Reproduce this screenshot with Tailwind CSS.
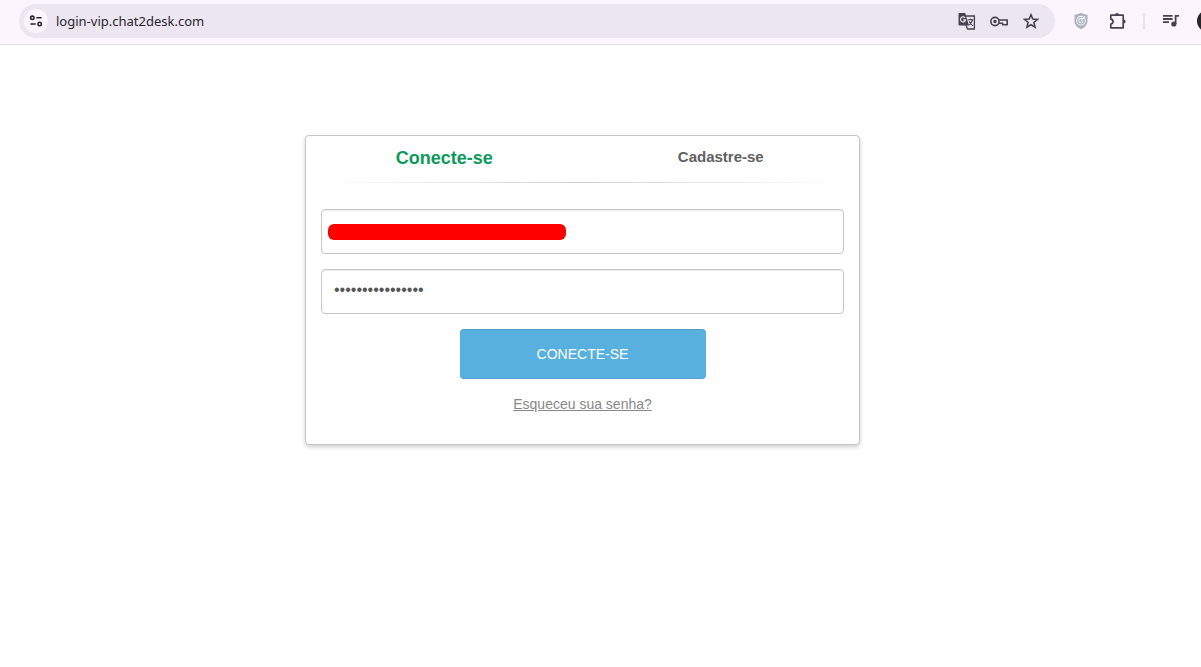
<!DOCTYPE html>
<html lang="pt-br">
<head>
  <meta charset="UTF-8" />
  <meta name="viewport" content="width=device-width, initial-scale=1.0" />
  <title>Conecte-se - Chat2Desk</title>
  <script src="https://cdn.jsdelivr.net/npm/@tailwindcss/browser@4"></script>
</head>
<body class="bg-white min-h-screen overflow-x-hidden font-['Liberation_Sans',Arial,sans-serif]">

  <!-- Barra do navegador -->
  <header class="flex items-start pt-1 pl-[19px] h-[45px] bg-[#fcf5fe] border-b border-[#e4dfe8] overflow-hidden text-[#47424f]">
    <div class="flex flex-1 items-center h-[34px] rounded-full bg-[#ece6f1] pl-[5px] pr-[14px]">
      <button type="button" aria-label="Informações do site" class="flex items-center justify-center size-6 rounded-full bg-[#fcf5fe] text-[#29252e]">
        <svg class="size-4" viewBox="0 0 16 16" fill="none" stroke="currentColor" stroke-width="1.6">
          <circle cx="4.3" cy="4.8" r="1.7" />
          <path d="M8.3 4.8H13.6M2.4 11H7.7" />
          <circle cx="11.7" cy="11" r="1.7" />
        </svg>
      </button>
      <input type="text" aria-label="Endereço" value="login-vip.chat2desk.com"
        class="flex-1 ml-2 h-6 text-[13px] text-[#29252e] bg-transparent outline-none font-['Noto_Sans','Open_Sans',sans-serif]" />
      <div class="flex items-center gap-3">
        <button type="button" aria-label="Traduzir">
          <svg class="size-5" viewBox="0 0 20 20" fill="none">
            <path d="M8.5 5H17.4V18H10.6L8.5 13" stroke="currentColor" stroke-width="1.3" />
            <path d="M2.6 2H8.2L12 14.5H2.6A1.1 1.1 0 0 1 1.5 13.4V3.1A1.1 1.1 0 0 1 2.6 2Z" fill="currentColor" />
            <path d="M8 6.9A2.5 2.5 0 1 0 8.5 8.8H6.2" stroke="#ece6f1" stroke-width="1.2" />
            <path d="M10.8 8.8H16.4M13.6 7.4V8.8M15.4 9C14.8 11.4 13.4 13 11.9 14.1M12.2 10.4C13.2 12.3 14.4 13.6 15.8 14.8" stroke="currentColor" stroke-width="1.1" />
          </svg>
        </button>
        <button type="button" aria-label="Senhas">
          <svg class="size-5" viewBox="0 0 20 20" fill="none" stroke="currentColor" stroke-width="1.6" stroke-linejoin="round">
            <path d="M9.7 9H18.2V13.8H13.6V12.2H9.7" />
            <circle cx="6" cy="10.5" r="4.1" />
            <circle cx="6" cy="10.5" r="1.7" fill="currentColor" stroke="none" />
          </svg>
        </button>
        <button type="button" aria-label="Favoritar">
          <svg class="size-5" viewBox="0 0 20 20" fill="none" stroke="currentColor" stroke-width="1.6">
            <path d="M10 3.7L11.8 8L16.5 8.4L12.9 11.5L14 16.1L10 13.7L6 16.1L7.1 11.5L3.5 8.4L8.2 8Z" />
          </svg>
        </button>
      </div>
    </div>

    <div class="flex items-center h-[34px] pl-4">
      <button type="button" aria-label="Extensão de proteção">
        <svg class="size-5" viewBox="0 0 20 20" fill="none">
          <path d="M10 1.8C12 3 14.2 3.5 16.5 3.7V9.5C16.5 13.8 13.8 16.6 10 18.3C6.2 16.6 3.5 13.8 3.5 9.5V3.7C5.8 3.5 8 3 10 1.8Z" fill="#a9b2bd" />
          <circle cx="10" cy="9.7" r="4.3" stroke="#eef1f4" stroke-width="1.1" />
          <path d="M11.7 8.1A2.2 2.2 0 1 0 12.1 10.3M10 9.7L14.2 5.5" stroke="#eef1f4" stroke-width="1.1" />
        </svg>
      </button>
      <button type="button" aria-label="Extensões" class="ml-[17px]">
        <svg class="size-5" viewBox="0 0 20 20" fill="none">
          <path d="M2.8 4.2H15.2V16.8H2.8V13C5.8 12.6 5.8 8.6 2.8 8.2Z" stroke="currentColor" stroke-width="1.7" stroke-linejoin="round" />
          <path d="M7 4A2 2 0 0 1 11 4ZM15.6 8.4A2 2 0 0 1 15.6 12.4Z" fill="currentColor" />
        </svg>
      </button>
      <span class="w-[2px] h-4 ml-[15px] bg-[#e9dcfb]"></span>
      <button type="button" aria-label="Controles de mídia" class="ml-4">
        <svg class="size-5" viewBox="0 0 20 20" fill="none" stroke="currentColor" stroke-width="1.8">
          <path d="M2 4.8H11.6M2 8H11.6M2 11.2H8M14.6 13V4.8H18" />
          <circle cx="12.8" cy="13" r="2.6" fill="currentColor" stroke="none" />
        </svg>
      </button>
      <button type="button" aria-label="Perfil" class="ml-4 -mr-[18px] size-[22px] rounded-full bg-[#262626] shrink-0"></button>
    </div>
  </header>

  <main class="pt-[90px] pr-9 pb-12">
    <div class="mx-auto w-full max-w-[555px] bg-white border border-[#c5c6ca] rounded-sm shadow-[0_2px_4px_rgba(0,0,0,0.2)] pb-[30px]">

      <nav class="grid grid-cols-2 h-[46px] text-center font-bold leading-[44px]">
        <a href="#login" class="text-[18px] text-[#0a9a5b]">Conecte-se</a>
        <a href="#cadastro" class="text-[15px] leading-[42px] text-[#616161]">Cadastre-se</a>
      </nav>
      <div class="h-px mx-[15px] bg-linear-to-r from-transparent via-[#d0d0d0] to-transparent"></div>

      <form id="login-form" class="flex flex-col gap-[15px] px-[15px] pt-[26px]">
        <div class="relative">
          <input type="text" id="email" name="email" aria-label="E-mail"
            class="block w-full h-[45px] px-3 border border-[#c5c6ca] rounded-sm text-[16px] text-[#555555] shadow-[inset_0_1px_1px_rgba(0,0,0,0.08)]" />
          <span class="absolute left-[7px] top-[15px] w-[238px] h-4 rounded-[6px] bg-[#ff0000]"></span>
        </div>

        <input type="password" id="password" name="password" aria-label="Senha" value="abcdefghijklmnop"
          class="block w-full h-[45px] px-3 pb-1 border border-[#c5c6ca] rounded-sm text-[16px] text-[#555555] shadow-[inset_0_1px_1px_rgba(0,0,0,0.08)]" />

        <button type="submit"
          class="self-center w-[246px] h-[50px] rounded-sm bg-[#58b0df] text-white text-sm uppercase shadow-[inset_0_1px_1px_rgba(0,0,0,0.1),inset_0_-1px_0_rgba(0,0,0,0.06)] hover:bg-[#46a3d4]">
          Conecte-se
        </button>

        <a href="#senha" class="self-center text-sm text-[#888888] underline">Esqueceu sua senha?</a>
      </form>
    </div>
  </main>

</body>
</html>
